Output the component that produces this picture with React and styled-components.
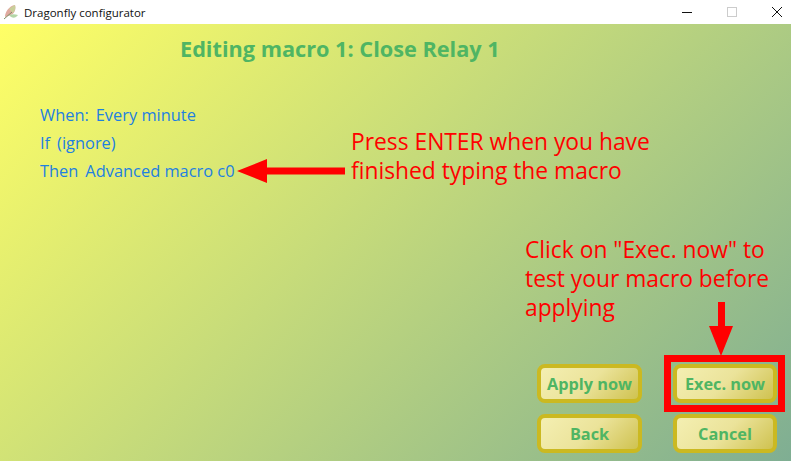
import React from "react";
import styled, { createGlobalStyle } from "styled-components";

const GlobalStyle = createGlobalStyle`
  html, body {
    margin: 0;
    padding: 0;
    background: #fff;
    overflow: hidden;
  }
  #root {
    width: 791px;
    height: 461px;
  }
`;

const Window = styled.div`
  width: 791px;
  height: 461px;
  display: flex;
  flex-direction: column;
  font-family: "Open Sans", "Noto Sans", sans-serif;
`;

const TitleBar = styled.div`
  height: 24px;
  flex: none;
  display: flex;
  align-items: center;
  background: #fff;
`;

const AppIcon = styled.svg`
  width: 16px;
  height: 16px;
  margin-left: 3px;
`;

const TitleText = styled.span`
  margin-left: 5px;
  font-size: 11.5px;
  color: #111;
`;

const WindowButtons = styled.div`
  margin-left: auto;
  padding-right: 9px;
  display: flex;
  gap: 35px;
  svg { display: block; }
`;

const Content = styled.div`
  position: relative;
  flex: 1;
  display: flex;
  flex-direction: column;
  background: linear-gradient(135deg, #ffff66 0%, #7fae93 100%);
`;

const Heading = styled.h1`
  margin: 11px 0 0 180px;
  font-size: 21.7px;
  line-height: 28px;
  font-weight: 700;
  color: #4fb563;
`;

const MacroLines = styled.div`
  margin: 42px 0 0 40px;
  display: flex;
  flex-direction: column;
  gap: 8px;
`;

const MacroLine = styled.div`
  display: flex;
  gap: 7px;
  font-size: 16.4px;
  line-height: 20px;
  color: #1e80e0;
`;

const Note = styled.div`
  position: absolute;
  left: ${(p) => p.$left}px;
  top: ${(p) => p.$top}px;
  font-size: 22.8px;
  line-height: 29px;
  color: #ff0000;
  white-space: nowrap;
`;

const Arrow = styled.svg`
  position: absolute;
  left: ${(p) => p.$left}px;
  top: ${(p) => p.$top}px;
`;

const ButtonGrid = styled.div`
  margin: auto 14px 8px auto;
  display: grid;
  grid-template-columns: 105px 104px;
  grid-auto-rows: 39px;
  column-gap: 31px;
  row-gap: 11px;
`;

const MacroButton = styled.button`
  box-sizing: border-box;
  border: 4px solid #cbb921;
  border-radius: 8px;
  background: linear-gradient(135deg, #f4efb2 0%, #ebe39a 50%, #cfc250 100%);
  font-family: "Open Sans", sans-serif;
  font-size: 16.3px;
  font-weight: 700;
  color: #4fb563;
  padding: 0;
`;

const Highlight = styled.div`
  position: absolute;
  left: 664px;
  top: 331px;
  width: 121px;
  height: 57px;
  box-sizing: border-box;
  border: 7px solid #ff0000;
`;

export default function App() {
  return (
    <>
      <GlobalStyle />
      <Window>
        <TitleBar>
          <AppIcon viewBox="0 0 16 16">
            <path d="M2 13 C2 8 6 2 12 1 C13 5 12 9 8 11 C6 12 4 12 2 13Z" fill="#e0aaa0" />
            <path d="M6 5 C8 3 10 2 12 1 C13 4 12 7 10 9Z" fill="#c9cf9a" />
            <path d="M6 11 C9 10 12 10 15 11 C13 14 9 15 6 11Z" fill="#b4d6a8" />
            <path d="M1 15 L9 8" stroke="#7f8f68" strokeWidth="1" />
          </AppIcon>
          <TitleText>Dragonfly configurator</TitleText>
          <WindowButtons>
            <svg width="10" height="10" viewBox="0 0 10 10"><path d="M0 5.5H10" stroke="#111" strokeWidth="1" /></svg>
            <svg width="10" height="10" viewBox="0 0 10 10"><rect x="0.5" y="0.5" width="9" height="9" fill="none" stroke="#ccc" /></svg>
            <svg width="10" height="10" viewBox="0 0 10 10"><path d="M0 0L10 10M10 0L0 10" stroke="#111" strokeWidth="1" /></svg>
          </WindowButtons>
        </TitleBar>
        <Content>
          <Heading>Editing macro 1: Close Relay 1</Heading>
          <MacroLines>
            <MacroLine><span>When:</span><span>Every minute</span></MacroLine>
            <MacroLine><span>If</span><span>(ignore)</span></MacroLine>
            <MacroLine><span>Then</span><span>Advanced macro c0</span></MacroLine>
          </MacroLines>

          <Note $left={351} $top={103}>Press ENTER when you have<br />finished typing the macro</Note>
          <Arrow $left={237} $top={135} width="108" height="24" viewBox="0 0 108 24">
            <path d="M0 12 L30 0 V8.5 H108 V15.5 H30 V24 Z" fill="#ff0000" />
          </Arrow>

          <Note $left={525} $top={211}>Click on "Exec. now" to<br />test your macro before<br />applying</Note>
          <Arrow $left={709} $top={278} width="24" height="54" viewBox="0 0 24 54">
            <path d="M12 54 L0 24 H9 V0 H16 V24 H24 Z" fill="#ff0000" />
          </Arrow>

          <ButtonGrid>
            <MacroButton>Apply now</MacroButton>
            <MacroButton>Exec. now</MacroButton>
            <MacroButton>Back</MacroButton>
            <MacroButton>Cancel</MacroButton>
          </ButtonGrid>
          <Highlight />
        </Content>
      </Window>
    </>
  );
}
